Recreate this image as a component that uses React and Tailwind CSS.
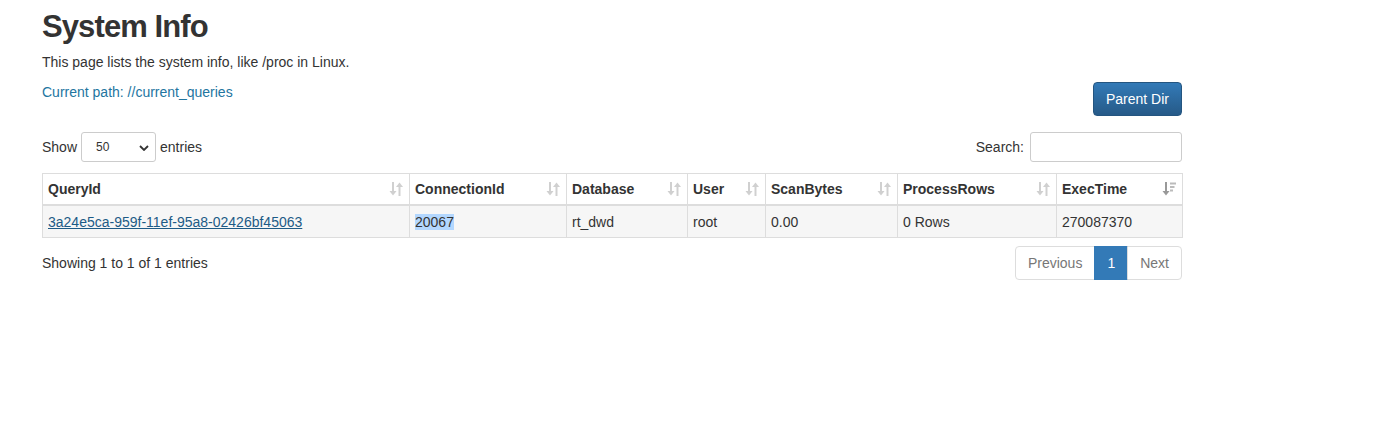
import { useState } from "react"

function SortIcon({ active }) {
    if (active) {
        return (
            <svg width="14" height="16" viewBox="0 0 14 16" className="shrink-0">
                <path d="M4 1v11" stroke="#999" strokeWidth="2" />
                <path d="M0.5 10l3.5 4.5 3.5-4.5z" fill="#999" />
                <rect x="8" y="1.5" width="6" height="2" fill="#bbb" />
                <rect x="8" y="5" width="4.5" height="2" fill="#bbb" />
                <rect x="8" y="8.5" width="3" height="2" fill="#bbb" />
            </svg>
        )
    }
    return (
        <svg width="14" height="16" viewBox="0 0 14 16" className="shrink-0">
            <path d="M4 1v11" stroke="#d0d0d0" strokeWidth="2" />
            <path d="M0.5 10l3.5 4.5 3.5-4.5z" fill="#d0d0d0" />
            <path d="M10.5 4v11" stroke="#d0d0d0" strokeWidth="2" />
            <path d="M7 6l3.5-4.5 3.5 4.5z" fill="#d0d0d0" />
        </svg>
    )
}

const columns = [
    { name: "QueryId", w: "w-[367px]" },
    { name: "ConnectionId", w: "w-[157px]" },
    { name: "Database", w: "w-[121px]" },
    { name: "User", w: "w-[78px]" },
    { name: "ScanBytes", w: "w-[132px]" },
    { name: "ProcessRows", w: "w-[159px]" },
    { name: "ExecTime", w: "w-[126px]", active: true },
]

export default function App() {
    const [size, setSize] = useState("50")

    return (
        <div className="min-h-[426px] bg-white font-['Liberation_Sans',Arial,sans-serif] text-[14px] leading-[20px] text-[#333]">
            <div className="w-[1140px] ml-[42px] pt-[10px]">
                <h1 className="text-[31px] leading-[33px] font-bold tracking-[-0.9px] text-[#333]">System Info</h1>
                <p className="mt-[9px]">This page lists the system info, like /proc in Linux.</p>

                <div className="mt-[10px] flex justify-between items-start">
                    <a className="text-[#23759f]">Current path: //current_queries</a>
                    <button className="h-[34px] px-[12px] rounded-[4px] border border-[#245580] bg-gradient-to-b from-[#337ab7] to-[#265a88] text-white">
                        Parent Dir
                    </button>
                </div>

                <div className="mt-[16px] flex justify-between items-center">
                    <div className="flex items-center gap-[4px]">
                        <span>Show</span>
                        <div className="relative w-[75px] h-[30px] border border-[#ccc] rounded-[3px] bg-white flex items-center">
                            <select
                                value={size}
                                onChange={e => setSize(e.target.value)}
                                className="appearance-none w-full h-full pl-[14px] text-[12px] bg-transparent outline-none"
                            >
                                <option>10</option>
                                <option>25</option>
                                <option>50</option>
                                <option>100</option>
                            </select>
                            <svg width="10" height="6" viewBox="0 0 10 6" className="absolute right-[6px] top-[12px] pointer-events-none">
                                <path d="M1 1l4 4 4-4" stroke="#333" strokeWidth="1.8" fill="none" />
                            </svg>
                        </div>
                        <span>entries</span>
                    </div>
                    <div className="flex items-center gap-[6px]">
                        <span>Search:</span>
                        <input className="w-[152px] h-[30px] border border-[#ccc] rounded-[3px] outline-none px-2" />
                    </div>
                </div>

                <table className="mt-[11px] w-full table-fixed border-collapse border border-[#ddd]">
                    <thead>
                        <tr>
                            {columns.map(col => (
                                <th key={col.name} className={`${col.w} border border-[#ddd] border-b-2 border-b-[#ddd] pl-[5px] pr-[6px] py-[5px] text-left font-bold`}>
                                    <div className="flex items-center justify-between">
                                        <span>{col.name}</span>
                                        <SortIcon active={col.active} />
                                    </div>
                                </th>
                            ))}
                        </tr>
                    </thead>
                    <tbody>
                        <tr className="bg-[#f6f6f6]">
                            <td className="border border-[#ddd] pl-[5px] pr-[6px] pt-[6px] pb-[5px]">
                                <a className="text-[#1d5b86] underline">3a24e5ca-959f-11ef-95a8-02426bf45063</a>
                            </td>
                            <td className="border border-[#ddd] pl-[5px] pr-[6px] pt-[6px] pb-[5px]">
                                <span className="bg-[#b3d7fe]">20067</span>
                            </td>
                            <td className="border border-[#ddd] pl-[5px] pr-[6px] pt-[6px] pb-[5px]">rt_dwd</td>
                            <td className="border border-[#ddd] pl-[5px] pr-[6px] pt-[6px] pb-[5px]">root</td>
                            <td className="border border-[#ddd] pl-[5px] pr-[6px] pt-[6px] pb-[5px]">0.00</td>
                            <td className="border border-[#ddd] pl-[5px] pr-[6px] pt-[6px] pb-[5px]">0 Rows</td>
                            <td className="border border-[#ddd] pl-[5px] pr-[6px] pt-[6px] pb-[5px]">270087370</td>
                        </tr>
                    </tbody>
                </table>

                <div className="mt-[8px] flex justify-between items-center">
                    <span>Showing 1 to 1 of 1 entries</span>
                    <div className="flex h-[34px]">
                        <span className="px-[12px] flex items-center border border-[#ddd] rounded-l-[4px] text-[#777]">Previous</span>
                        <span className="px-[12px] flex items-center border border-[#337ab7] bg-[#337ab7] text-white -ml-px">1</span>
                        <span className="px-[12px] flex items-center border border-[#ddd] rounded-r-[4px] text-[#777] -ml-px">Next</span>
                    </div>
                </div>
            </div>
        </div>
    )
}
